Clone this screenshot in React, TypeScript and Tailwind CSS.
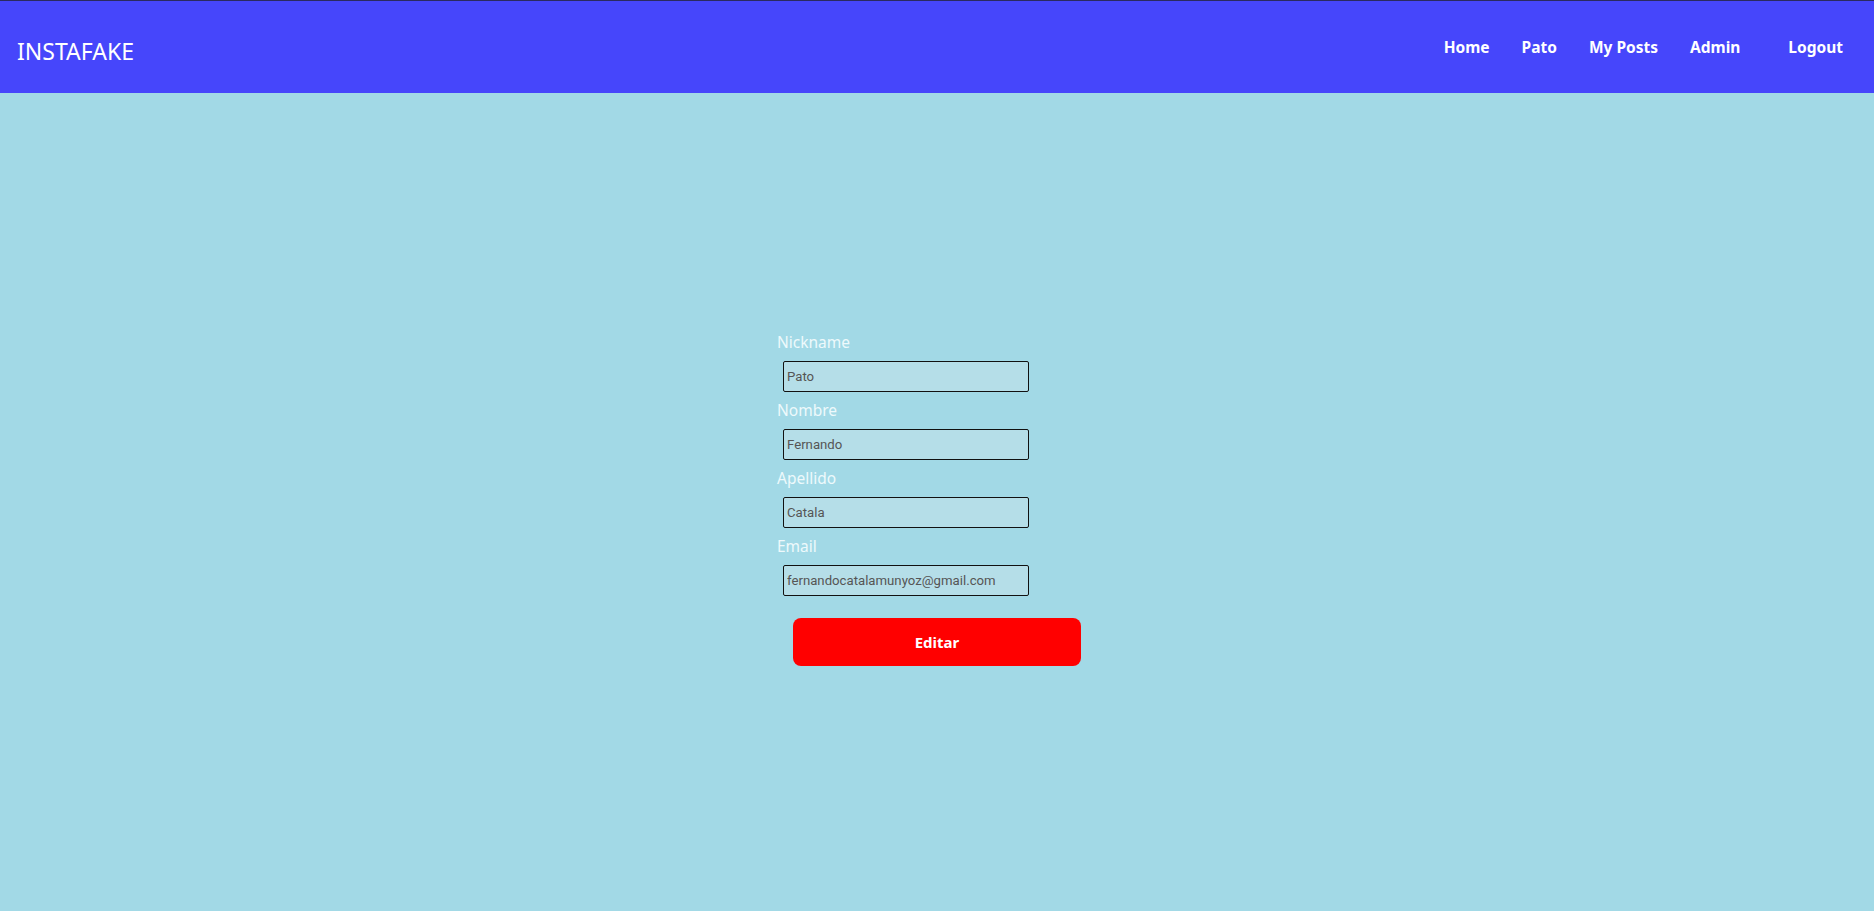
import React from "react";

const fields = [
  { label: "Nickname", value: "Pato" },
  { label: "Nombre", value: "Fernando" },
  { label: "Apellido", value: "Catala" },
  { label: "Email", value: "fernandocatalamunyoz@gmail.com" },
];

export default function App() {
  return (
    <div className="min-h-[911px] bg-[#a2d9e6] flex flex-col" style={{ fontFamily: '"Noto Sans", "Open Sans", sans-serif' }}>
      <header className="h-[93px] bg-[#4646fb] border-t border-[#2a2a60] flex items-center justify-between pl-[17px] pr-[15px]">
        <div className="text-white text-[23px] mt-[9px] leading-none">INSTAFAKE</div>
        <nav className="flex items-center mt-[2px] text-white font-bold text-[15.5px]">
          <a className="px-4">Home</a>
          <a className="px-4">Pato</a>
          <a className="px-4">My Posts</a>
          <a className="px-4">Admin</a>
          <a className="pl-[32px] pr-4">Logout</a>
        </nav>
      </header>
      <main className="flex justify-center pt-[238px]">
        <form className="w-[320px] flex flex-col">
          {fields.map((f) => (
            <div key={f.label} className="flex flex-col">
              <label className="h-[24px] leading-[23px] text-[15.5px] text-[#eef9fc]">{f.label}</label>
              <input
                readOnly
                value={f.value}
                className="ml-[6px] mt-[6px] mb-[7px] w-[246px] h-[31px] bg-[#b5dee8] border border-[#111] rounded-[2px] px-[3px] text-[13.2px] text-[#555] outline-none"
                style={{ fontFamily: 'Roboto, "Liberation Sans", Arial, sans-serif' }}
              />
            </div>
          ))}
          <button
            type="button"
            className="mt-[15px] ml-[16px] w-[288px] h-[48px] bg-[#ff0000] rounded-[8px] text-white font-bold text-[15px]"
          >
            Editar
          </button>
        </form>
      </main>
    </div>
  );
}
